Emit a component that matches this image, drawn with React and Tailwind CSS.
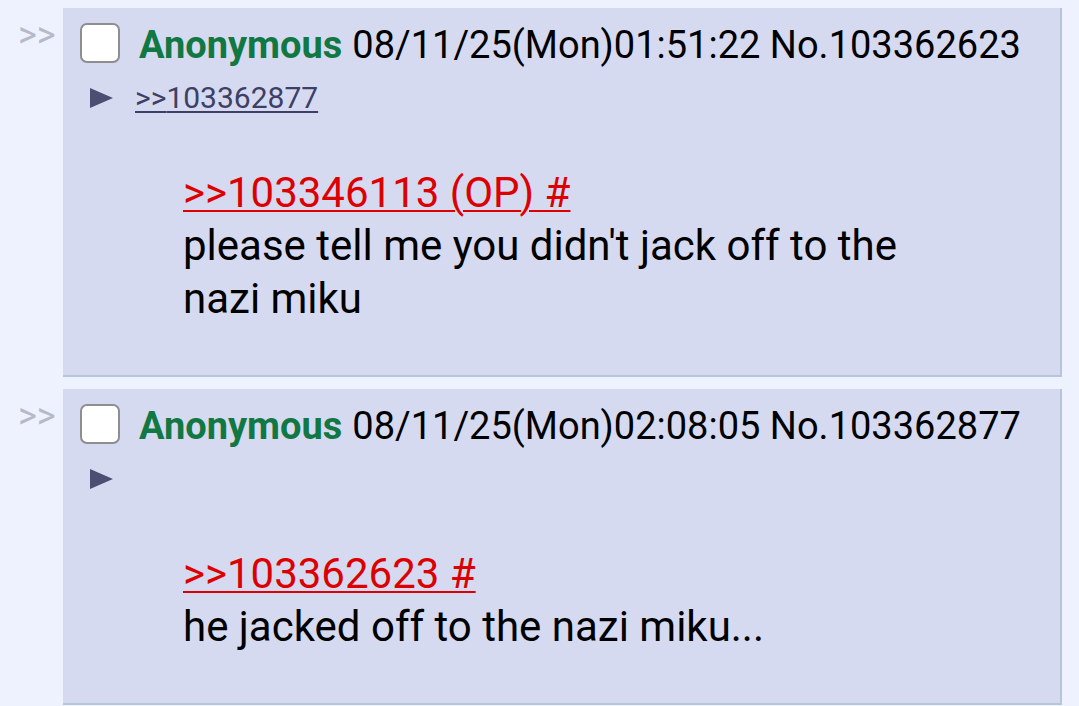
import React from 'react';

function Triangle() {
    return (
        <svg width="23" height="20" viewBox="0 0 23 20" className="shrink-0">
            <polygon points="0,0 23,10 0,20" fill="#4c4e72" />
        </svg>
    );
}

function Post({ no, date, backlink, quote, lines }) {
    return (
        <div className="flex">
            <div className="w-[63px] shrink-0 pl-[18px] pt-[10px] text-[36px] leading-[34px] text-[#b5b9c8] select-none">
                &gt;&gt;
            </div>
            <div className="w-[999px] shrink-0 bg-[#d6daf0] border-r-2 border-b-2 border-[#b7c5d9] pt-[15px] pb-[50px]">
                <div className="flex items-center h-[40px]">
                    <span className="ml-[17px] w-[40px] h-[40px] shrink-0 rounded-[7px] border-2 border-[#8e8e8e] bg-white" />
                    <span className="ml-[19px] mt-[4px] text-[38px] leading-[40px] font-bold text-[#117743] whitespace-nowrap">Anonymous</span>
                    <span className="ml-[10px] mt-[4px] text-[38px] leading-[40px] text-black whitespace-nowrap">
                        {date} No.{no}
                    </span>
                </div>
                <div className="flex items-center h-[36px] mt-[17px]">
                    <span className="ml-[27px]">
                        <Triangle />
                    </span>
                    {backlink && (
                        <a className="ml-[22px] text-[30px] leading-[36px] text-[#3d3f66] underline decoration-[1.5px] underline-offset-[3px]">
                            &gt;&gt;{backlink}
                        </a>
                    )}
                </div>
                <div className="ml-[120px] mr-[120px] mt-[50px] text-[42px] leading-[53px] text-black">
                    <a className="text-[#dd0000] underline decoration-2 underline-offset-[3px]">{quote}</a>
                    {lines.map((l, i) => (
                        <div key={i}>{l}</div>
                    ))}
                </div>
            </div>
        </div>
    );
}

export default function App() {
    return (
        <div className="min-h-[706px] bg-[#eef2ff] pt-[8px] flex flex-col gap-[12px] font-['Roboto',sans-serif]">
            <Post
                no="103362623"
                date="08/11/25(Mon)01:51:22"
                backlink="103362877"
                quote=">>103346113 (OP) #"
                lines={["please tell me you didn't jack off to the nazi miku"]}
            />
            <Post
                no="103362877"
                date="08/11/25(Mon)02:08:05"
                quote=">>103362623 #"
                lines={["he jacked off to the nazi miku..."]}
            />
        </div>
    );
}
